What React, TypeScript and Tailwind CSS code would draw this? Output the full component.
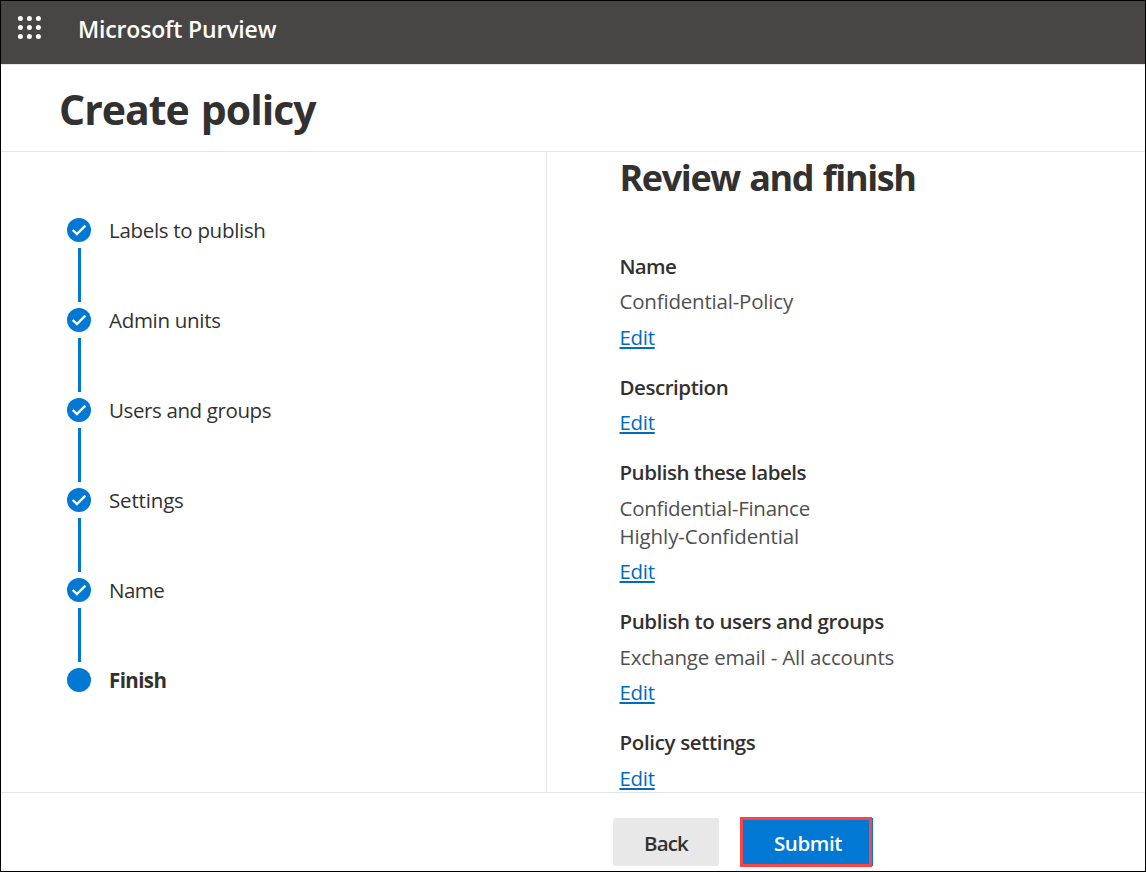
type Step = { label: string; className: string; done: boolean };

const steps: Step[] = [
  { label: "Labels to publish", className: "tracking-[-0.3px]", done: true },
  { label: "Admin units", className: "tracking-[-0.3px]", done: true },
  { label: "Users and groups", className: "tracking-[-0.38px]", done: true },
  { label: "Settings", className: "tracking-[-0.16px]", done: true },
  { label: "Name", className: "tracking-[-0.5px]", done: true },
  { label: "Finish", className: "font-bold tracking-[-0.6px]", done: false },
];

type Line = { text: string; className: string };
type Section = { title: Line; values: Line[]; editClassName: string };

const sections: Section[] = [
  {
    title: { text: "Name", className: "mb-[7px] tracking-[-0.7px]" },
    values: [{ text: "Confidential-Policy", className: "tracking-[-0.2px]" }],
    editClassName: "mt-2",
  },
  {
    title: { text: "Description", className: "mb-[7px] tracking-[-0.45px]" },
    values: [],
    editClassName: "",
  },
  {
    title: { text: "Publish these labels", className: "mb-2 tracking-[-0.48px]" },
    values: [
      { text: "Confidential-Finance", className: "tracking-[-0.27px]" },
      { text: "Highly-Confidential", className: "tracking-[-0.1px]" },
    ],
    editClassName: "mt-[7px]",
  },
  {
    title: { text: "Publish to users and groups", className: "mb-2 tracking-[-0.38px]" },
    values: [{ text: "Exchange email - All accounts", className: "tracking-[-0.19px]" }],
    editClassName: "mt-[7px]",
  },
  {
    title: { text: "Policy settings", className: "mb-2 tracking-[-0.34px]" },
    values: [],
    editClassName: "",
  },
];

function Waffle() {
  const at = [3.4, 12.4, 21.4];
  return (
    <svg width="24" height="24" viewBox="0 0 24 24" fill="#fff" aria-hidden="true">
      {at.map((y) => at.map((x) => <circle key={`${x}-${y}`} cx={x} cy={y} r="2.5" />))}
    </svg>
  );
}

function StepMarker({ done }: { done: boolean }) {
  return (
    <svg width="24" height="24" viewBox="0 0 24 24" aria-hidden="true">
      <circle cx="12" cy="12" r="12" fill="#0078d4" />
      {done && <path d="M5.7 12 9.9 16.1 18.4 7.6" fill="none" stroke="#fff" strokeWidth="2.4" />}
    </svg>
  );
}

export default function App() {
  return (
    <div className="flex h-[872px] w-[1146px] flex-col overflow-hidden border border-black bg-white font-['Open_Sans','Noto_Sans',sans-serif] text-[20.5px] leading-7 text-[#323130]">
      <header className="flex h-[63px] shrink-0 items-start bg-[#484644] pl-4">
        <div className="pt-[14px]">
          <Waffle />
        </div>
        <span className="ml-[37px] pt-[14px] text-[23px] font-semibold tracking-[-0.16px] whitespace-nowrap text-white">
          Microsoft Purview
        </span>
      </header>
      <div className="h-[88px] shrink-0 border-y border-[#e5e5e5] pl-[58px]">
        <h1 className="pt-4 text-[41px] leading-[56px] font-bold tracking-[-1px] whitespace-nowrap [word-spacing:2.4px]">
          Create policy
        </h1>
      </div>
      <main className="flex h-[640px] shrink-0">
        <nav className="w-[546px] shrink-0 border-r border-[#e5e5e5] pt-[66px] pl-[66px]">
          {steps.map((step) => (
            <div key={step.label} className="flex h-[90px] gap-[18px]">
              <div className="flex w-6 flex-col items-center">
                <StepMarker done={step.done} />
                {step.done && <div className="mt-[6px] ml-px h-[54px] w-[3px] bg-[#0078d4]" />}
              </div>
              <span className={`h-6 leading-6 whitespace-nowrap ${step.className}`}>{step.label}</span>
            </div>
          ))}
        </nav>
        <section className="flex-1 overflow-hidden pl-[72.5px]">
          <h2 className="text-[36px] leading-[52px] font-bold tracking-[-1.4px] whitespace-nowrap [word-spacing:1.6px]">
            Review and finish
          </h2>
          <div className="mt-[48px] flex flex-col gap-[22px]">
            {sections.map((section) => (
              <div key={section.title.text} className="flex flex-col items-start">
                <h3 className={`font-semibold whitespace-nowrap ${section.title.className}`}>{section.title.text}</h3>
                {section.values.length > 0 && (
                  <div className="text-[#505050]">
                    {section.values.map((value) => (
                      <p key={value.text} className={`whitespace-nowrap ${value.className}`}>
                        {value.text}
                      </p>
                    ))}
                  </div>
                )}
                <a
                  href="#"
                  className={`tracking-[-0.3px] text-[#006cbe] underline decoration-2 underline-offset-2 ${section.editClassName}`}
                >
                  Edit
                </a>
              </div>
            ))}
          </div>
        </section>
      </main>
      <footer className="flex h-[78px] shrink-0 border-t border-[#e5e5e5] pl-[612px]">
        <button className="mt-[25px] h-12 w-[106px] rounded-[3px] bg-[#e8e8e8] pt-[2px] font-semibold tracking-[-0.8px]">
          Back
        </button>
        <div className="mt-6 ml-[21px] flex h-[50px] w-[133px] bg-[#0078d4] bg-clip-content py-px">
          <button className="-my-px h-[50px] w-[132px] border-3 border-[#ff4343] bg-[#0078d4] pt-[2px] pl-[4px] font-semibold tracking-[-0.4px] text-white">
            Submit
          </button>
        </div>
      </footer>
    </div>
  );
}
